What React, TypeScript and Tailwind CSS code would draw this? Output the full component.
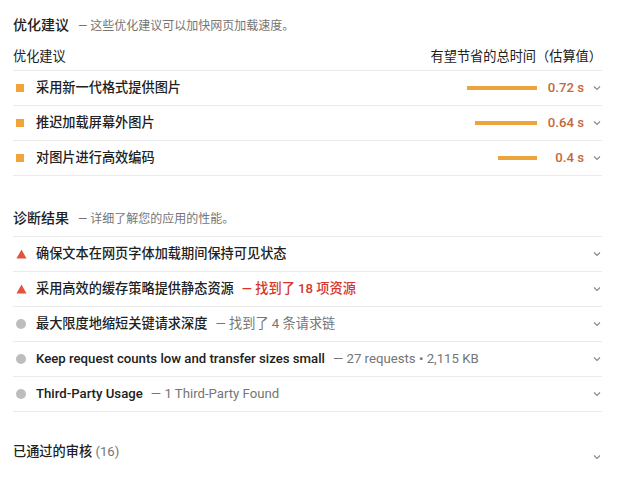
import { ReactNode } from 'react';

type Opportunity = { title: string; seconds: number };
type Diagnostic = {
  title: string;
  kind: 'fail' | 'info';
  detail?: string;
};

const opportunities: Opportunity[] = [
  { title: '采用新一代格式提供图片', seconds: 0.72 },
  { title: '推迟加载屏幕外图片', seconds: 0.64 },
  { title: '对图片进行高效编码', seconds: 0.4 },
];

const diagnostics: Diagnostic[] = [
  { title: '确保文本在网页字体加载期间保持可见状态', kind: 'fail' },
  { title: '采用高效的缓存策略提供静态资源', kind: 'fail', detail: '找到了 18 项资源' },
  { title: '最大限度地缩短关键请求深度', kind: 'info', detail: '找到了 4 条请求链' },
  { title: 'Keep request counts low and transfer sizes small', kind: 'info', detail: '27 requests • 2,115 KB' },
  { title: 'Third-Party Usage', kind: 'info', detail: '1 Third-Party Found' },
];

function Chevron() {
  return (
    <svg width="10" height="10" viewBox="0 0 10 10" className="shrink-0 text-[#8a8a8a]">
      <path d="M2 3.5 L5 6.5 L8 3.5" fill="none" stroke="currentColor" strokeWidth="1.2" />
    </svg>
  );
}

function SectionTitle({ title, desc }: { title: string; desc: string }) {
  return (
    <div className="flex items-baseline gap-[9px] text-[#212121]">
      <span className="text-[14px] font-medium">{title}</span>
      <span className="text-[12px] text-[#757575]">— {desc}</span>
    </div>
  );
}

function Row({ icon, children, right }: { icon: ReactNode; children: ReactNode; right?: ReactNode }) {
  return (
    <div className="flex h-[35px] items-center border-b border-[#ebebeb]">
      <div className="flex w-[23px] justify-start pl-[3px]">{icon}</div>
      <div className="flex min-w-0 flex-1 items-center text-[13.2px]">{children}</div>
      {right}
      <div className="ml-[8px] flex w-[10px] justify-center">
        <Chevron />
      </div>
    </div>
  );
}

export default function App() {
  return (
    <div
      className="h-[500px] w-[636px] bg-white pl-[13px] pr-[34px] text-[#212121]"
      style={{ fontFamily: 'Roboto, "Noto Sans CJK SC", sans-serif' }}
    >
      <div className="pt-[15px]">
        <SectionTitle title="优化建议" desc="这些优化建议可以加快网页加载速度。" />
      </div>
      <div className="mt-[11px] flex h-[24px] items-start justify-between border-b border-[#ebebeb] text-[13.2px]">
        <span>优化建议</span>
        <span>有望节省的总时间（估算值）</span>
      </div>
      {opportunities.map((o) => (
        <Row
          key={o.title}
          icon={<span className="block h-[8px] w-[8px] bg-[#f2a33a]" />}
          right={
            <div className="flex items-center">
              <div className="flex w-[100px] justify-end">
                <div className="h-[4px] bg-[#eba43e]" style={{ width: Math.round(o.seconds * 97) }} />
              </div>
              <span className="w-[47px] text-right text-[13.2px] font-medium text-[#c5683a]">
                {o.seconds} s
              </span>
            </div>
          }
        >
          <span className="font-medium">{o.title}</span>
        </Row>
      ))}

      <div className="mt-[32px] h-[28px]">
        <SectionTitle title="诊断结果" desc="详细了解您的应用的性能。" />
      </div>
      <div className="border-t border-[#ebebeb]" />
      {diagnostics.map((d) => (
        <Row
          key={d.title}
          icon={
            d.kind === 'fail' ? (
              <svg width="11" height="10" viewBox="0 0 11 10">
                <path d="M5.5 0.5 L10.5 9.5 L0.5 9.5 Z" fill="#e0533e" />
              </svg>
            ) : (
              <span className="block h-[10px] w-[10px] rounded-full bg-[#bdbdbd]" />
            )
          }
        >
          <span className="whitespace-nowrap font-medium">{d.title}</span>
          {d.detail && (
            <span
              className={`ml-[8px] whitespace-nowrap ${
                d.kind === 'fail' ? 'font-medium text-[#d7352a]' : 'text-[#757575]'
              }`}
            >
              — {d.detail}
            </span>
          )}
        </Row>
      ))}

      <div className="mt-[30px] flex items-center justify-between">
        <div className="text-[13.2px] font-medium">
          已通过的审核 <span className="font-normal text-[#757575]">(16)</span>
        </div>
        <div className="mt-[10px]">
          <Chevron />
        </div>
      </div>
    </div>
  );
}
